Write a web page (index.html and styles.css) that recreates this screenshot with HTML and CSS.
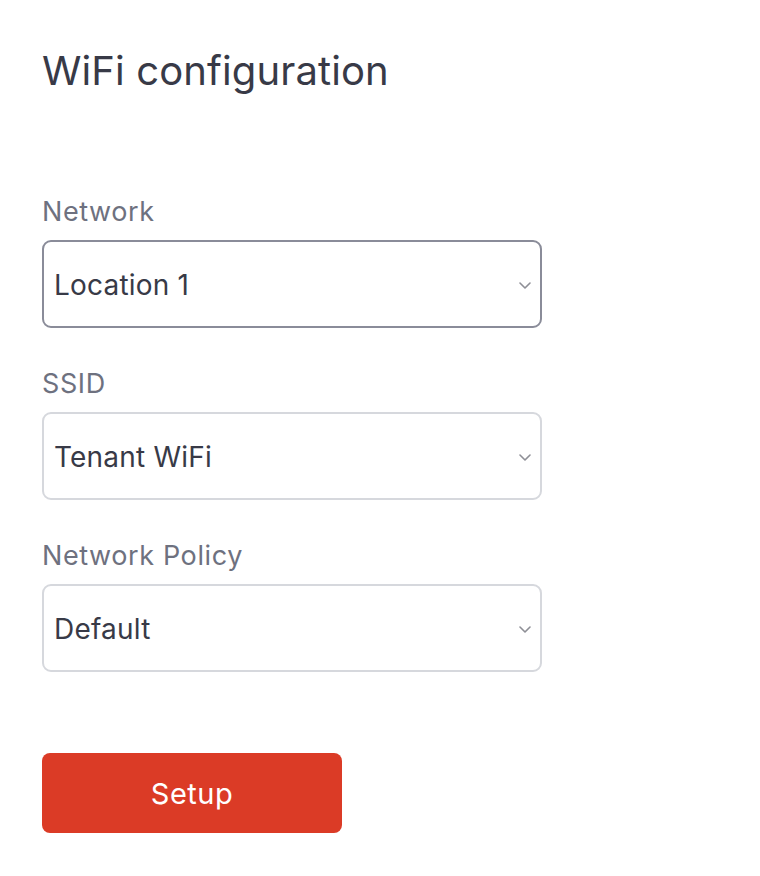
FILE: index.html
```html
<!DOCTYPE html>
<html lang="en">
<head>
<meta charset="utf-8">
<title>WiFi configuration</title>
<link rel="stylesheet" href="styles.css">
</head>
<body>
<main class="page">
  <h1 class="title">WiFi configuration</h1>
  <form class="form">
    <div class="field">
      <label class="label">Network</label>
      <div class="select select--focused">
        <span class="select__value">Location 1</span>
        <svg class="chevron" width="12" height="7" viewBox="0 0 12 7"><path d="M1 1l5 5 5-5" fill="none" stroke="#8e8f96" stroke-width="1.6" stroke-linecap="round" stroke-linejoin="round"/></svg>
      </div>
    </div>
    <div class="field">
      <label class="label">SSID</label>
      <div class="select">
        <span class="select__value">Tenant WiFi</span>
        <svg class="chevron" width="12" height="7" viewBox="0 0 12 7"><path d="M1 1l5 5 5-5" fill="none" stroke="#8e8f96" stroke-width="1.6" stroke-linecap="round" stroke-linejoin="round"/></svg>
      </div>
    </div>
    <div class="field">
      <label class="label">Network Policy</label>
      <div class="select">
        <span class="select__value">Default</span>
        <svg class="chevron" width="12" height="7" viewBox="0 0 12 7"><path d="M1 1l5 5 5-5" fill="none" stroke="#8e8f96" stroke-width="1.6" stroke-linecap="round" stroke-linejoin="round"/></svg>
      </div>
    </div>
    <button type="button" class="button">Setup</button>
  </form>
</main>
</body>
</html>
```

FILE: styles.css
```css
* { box-sizing: border-box; }
html, body { margin: 0; padding: 0; background: #ffffff; }
body { font-family: Inter, "Noto Sans", sans-serif; }

.page {
  padding: 47px 0 0 42px;
}

.title {
  margin: 0;
  font-size: 40px;
  line-height: 48px;
  font-weight: 400;
  color: #383a47;
  letter-spacing: 0.12px;
}

.form {
  display: flex;
  flex-direction: column;
  margin-top: 101px;
  width: 500px;
}

.field {
  display: flex;
  flex-direction: column;
  gap: 12px;
  margin-bottom: 40px;
}

.label {
  font-size: 27px;
  line-height: 32px;
  color: #6e717f;
  letter-spacing: 0.6px;
}

.select {
  height: 88px;
  border: 2px solid #d6d8dd;
  border-radius: 9px;
  padding: 2px 9px 0 10px;
  display: flex;
  align-items: center;
  justify-content: space-between;
}

.select--focused {
  border-color: #8a8c99;
}

.select__value {
  font-size: 28px;
  color: #383a47;
  letter-spacing: 0.2px;
}

.chevron { flex: none; }

.button {
  margin-top: 41px;
  width: 300px;
  height: 80px;
  border: none;
  border-radius: 8px;
  background: #db3b26;
  color: #ffffff;
  font-family: Inter, "Noto Sans", sans-serif;
  font-size: 29px;
  letter-spacing: 0.5px;
  cursor: pointer;
}
```
